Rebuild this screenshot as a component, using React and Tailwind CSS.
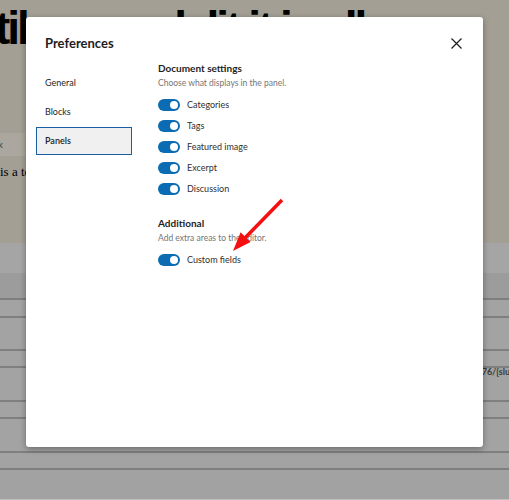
const docItems = ["Categories", "Tags", "Featured image", "Excerpt", "Discussion"];
const navItems = ["General", "Blocks", "Panels"];
const rowHeights = [16, 31, 15, 32, 15, 32, 15];

const Toggle = () => (
  <span className="relative inline-flex h-[12px] w-[22px] shrink-0 items-center rounded-full bg-[#0b6cb3]">
    <span className="absolute right-[2px] h-[8px] w-[8px] rounded-full bg-white" />
  </span>
);

const ToggleRow = ({ label }) => (
  <div className="flex h-[21px] items-center gap-[7px]">
    <Toggle />
    <span className="text-[9px] leading-none text-[#2f2f2f]">{label}</span>
  </div>
);

const Section = ({ title, desc, items, className }) => (
  <div className={className}>
    <h3 className="text-[10px] font-bold leading-[16px] text-[#1e1e1e]">{title}</h3>
    <p className="mt-[1px] text-[8.5px] leading-[12px] text-[#757575]">{desc}</p>
    <div className="mt-[5px] flex flex-col">
      {items.map((item) => (
        <ToggleRow key={item} label={item} />
      ))}
    </div>
  </div>
);

export default function App() {
  return (
    <div className="relative h-[500px] w-[509px] overflow-hidden bg-[#a1a2a1] font-['Lato',sans-serif]">
      {/* page behind the overlay */}
      <div className="h-[243px] overflow-hidden bg-[#a39f94]">
        <h1 className="ml-[-5px] mt-[5px] whitespace-nowrap font-['Liberation_Sans',sans-serif] text-[46px] font-bold leading-none tracking-[-3px] text-black">
          tiles on a lelit it is all
        </h1>
        <div className="mt-[82px] ml-[-30px] flex h-[23px] w-[55px] items-center bg-[#aba79f] pl-[11px] text-[9px] text-[#333]">
          Block
        </div>
        <p className="mt-[8px] whitespace-nowrap font-['Liberation_Serif',serif] text-[13px] leading-[16px] text-black">
          is a test paragraph for the editor
        </p>
      </div>
      <div className="h-[30px] bg-[#a4a5a4]" />
      <div className="h-[25px] bg-[#9b9c9b]" />
      {rowHeights.map((h, i) => (
        <div key={i} className="border-t-2 border-[#7e7f7e] bg-[#a2a3a2]" style={{ height: h + 2 }}>
          {i === 3 && (
            <div className="ml-[466px] mt-[-3px] whitespace-nowrap text-[9px] font-bold leading-[14px] text-[#3a3a3a]">
              17776/{"{slug}"}
            </div>
          )}
        </div>
      ))}
      <div className="h-[31px] border-t-2 border-[#7e7f7e] bg-[#a1a2a1]" />
      <div className="h-[4px] border-t border-[#c0c1c0] bg-[#a1a2a1]" />

      {/* modal */}
      <div className="absolute left-[26px] top-[17px] h-[430px] w-[457px] rounded-[3px] bg-white shadow-[0_2px_6px_rgba(0,0,0,0.35)]">
        <div className="flex items-center justify-between pl-[19px] pr-[21px] pt-[17px]">
          <h2 className="text-[13px] font-bold leading-[18px] text-[#1e1e1e]">Preferences</h2>
          <svg width="11" height="11" viewBox="0 0 11 11" fill="none" stroke="#1e1e1e" strokeWidth="1.2">
            <path d="M0.5 0.5 L10.5 10.5 M10.5 0.5 L0.5 10.5" />
          </svg>
        </div>
        <div className="mt-[8px] flex">
          <nav className="ml-[10px] mt-[9px] flex w-[96px] flex-col gap-[1px]">
            {navItems.map((item) => (
              <div
                key={item}
                className={
                  item === "Panels"
                    ? "flex h-[28px] items-center border border-[#1a5fa3] bg-[#f0f0f0] pl-[8px] text-[9px] font-semibold text-[#1e1e1e]"
                    : "flex h-[28px] items-center pl-[9px] text-[9px] text-[#1e1e1e]"
                }
              >
                {item}
              </div>
            ))}
          </nav>
          <div className="ml-[26px] flex flex-col">
            <Section title="Document settings" desc="Choose what displays in the panel." items={docItems} />
            <Section
              className="mt-[16px]"
              title="Additional"
              desc="Add extra areas to the editor."
              items={["Custom fields"]}
            />
          </div>
        </div>
      </div>

      {/* red annotation arrow */}
      <svg className="absolute left-0 top-0" width="509" height="500" viewBox="0 0 509 500">
        <line x1="282" y1="200" x2="243" y2="240" stroke="#f41010" strokeWidth="3.5" />
        <polygon points="233,251 240.6,232.2 250.6,242" fill="#f41010" />
      </svg>
    </div>
  );
}
